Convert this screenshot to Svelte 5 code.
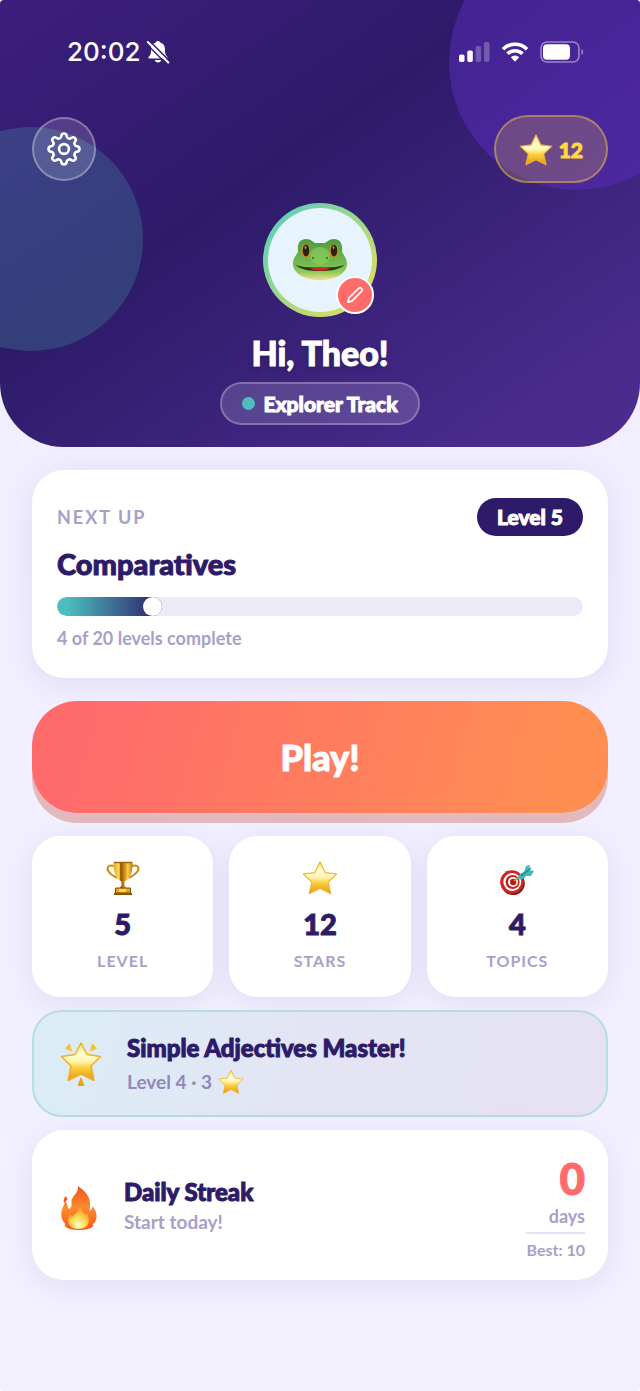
<script lang="ts">
  const player = { name: "Theo", track: "Explorer Track", stars: 12 };
  const next = { title: "Comparatives", level: 5, done: 4, total: 20 };
  const streak = { days: 0, best: 10 };

  const stats = [
    { icon: "trophy", value: 5, label: "LEVEL" },
    { icon: "star", value: 12, label: "STARS" },
    { icon: "target", value: 4, label: "TOPICS" },
  ];

  let percent = $derived((next.done / next.total) * 100);

  // eight round teeth, each an outward arc followed by an inward one
  function gear_path() {
    const at = (deg: number) => {
      const a = (deg * Math.PI) / 180;
      return `${(18 + 13.6 * Math.sin(a)).toFixed(2)} ${(18 - 13.6 * Math.cos(a)).toFixed(2)}`;
    };
    let d = `M${at(-11)}`;
    for (let i = 0; i < 8; i++) {
      d += `A2.65 2.65 0 0 1 ${at(i * 45 + 11)}`;
      d += `A2.9 2.9 0 0 0 ${at(i * 45 + 34)}`;
    }
    return d + "Z";
  }
</script>

<svelte:head>
  <title>Home</title>
</svelte:head>

{#snippet star(size)}
  <svg width={size} height={size} viewBox="0 0 32 32" aria-hidden="true">
    <defs>
      <linearGradient id="gold" x1="0" y1="0" x2="0" y2="1">
        <stop offset="0" stop-color="#fbe27a" />
        <stop offset="0.28" stop-color="#fffbd0" />
        <stop offset="0.48" stop-color="#fef6b4" />
        <stop offset="0.66" stop-color="#fbcf3c" />
        <stop offset="1" stop-color="#e8960f" />
      </linearGradient>
    </defs>
    <path d="M16 1.600 20.600 11.200 31 12.400 23.300 19.600 25.500 30 16 25.200 6.500 30 8.700 19.600 1 12.400 11.400 11.200Z"
      fill="url(#gold)" stroke="#f0b22c" stroke-width="1" stroke-linejoin="round" />
  </svg>
{/snippet}

{#snippet trophy()}
  <svg width="36" height="36" viewBox="0 0 36 36" aria-hidden="true">
    <defs>
      <linearGradient id="cup" x1="0" x2="1">
        <stop offset="0" stop-color="#e9ac22" />
        <stop offset="0.3" stop-color="#ffd95a" />
        <stop offset="0.38" stop-color="#8f4f08" />
        <stop offset="0.55" stop-color="#c9820f" />
        <stop offset="0.75" stop-color="#f8cf4e" />
        <stop offset="1" stop-color="#c07a0c" />
      </linearGradient>
    </defs>
    <path d="M9 6C3 4 1 8 4 12c2 3 5 4 8 6M27 6c6-2 8 2 5 6-2 3-5 4-8 6" fill="none" stroke="#c98a17" stroke-width="2" />
    <path d="M8.500 2h19c.6 9-2 17-8 19.500v4l2 2.500h-7l2-2.500v-4C10.500 19 8 11 8.500 2Z" fill="url(#cup)" />
    <path d="M9 2.500h18" stroke="#a5650c" stroke-width="1.500" />
    <path d="M10.500 28h15v5h-15z" fill="#e0a323" stroke="#8c5009" />
    <path d="M14 29h8l-2 3h-6z" fill="#f9d866" />
    <path d="M9 34h18" stroke="#8c5009" stroke-width="2" />
  </svg>
{/snippet}

{#snippet target()}
  <svg width="36" height="36" viewBox="0 0 36 36" aria-hidden="true">
    <ellipse cx="14" cy="23.500" rx="11.800" ry="11.500" fill="#7e1712" />
    <circle cx="13" cy="22" r="11.800" fill="#d3221f" />
    <circle cx="13.300" cy="22" r="9" fill="#fff" />
    <circle cx="13.600" cy="22" r="7" fill="#c9201d" />
    <circle cx="14" cy="22" r="5" fill="#fff" />
    <circle cx="14.200" cy="22" r="3.200" fill="#b81a1a" />
    <path d="M15 21 23 15" stroke="#d49a3b" stroke-width="1.500" />
    <path d="M19 19c0-3 2-6 6-7l2-6 4-1-1 5 5 1-3 5-5 0c-2 3-5 4-8 3Z" fill="#3fb9bd" />
    <path d="m22 16 10-8" stroke="#1e7f93" stroke-width="1.200" />
  </svg>
{/snippet}

<div class="screen">
  <header>
    <div class="bubble right"></div>
    <div class="bubble left"></div>

    <div class="status">
      <div class="clock">
        <span>20:02</span>
        <svg width="24" height="24" viewBox="0 0 24 24" aria-label="Silent">
          <path d="M3.500 18.500c-1.500 0-1.500-1-.5-2 2-2 2-3.500 2-7C5 5 7.500 3 10 2.500 10 .5 14 .5 14 2.500c2.500.5 5 2.500 5 7 0 3.500 0 5 2 7 1 1 1 2-.5 2Z" fill="#fff" />
          <path d="M8.800 20h6.400c-.4 3.300-6 3.300-6.400 0Z" fill="#fff" />
          <path d="m3.500 1 21 21" stroke="#351d75" stroke-width="1.600" />
          <path d="m1.800 2 20.500 20.500" stroke="#fff" stroke-width="2" stroke-linecap="round" />
          <path d="m0 3.400 20.500 20.500" stroke="#351d75" stroke-width="1.400" />
        </svg>
      </div>
      <div class="signals">
        <svg width="32" height="20" viewBox="0 0 32 20" aria-label="Signal">
          <rect x="1" y="12.500" width="5.500" height="7.500" rx="1.800" fill="#fff" />
          <rect x="9.300" y="8.500" width="5.500" height="11.500" rx="1.800" fill="#fff" />
          <rect x="17.600" y="4" width="5.500" height="16" rx="1.800" fill="#fff" opacity="0.25" />
          <rect x="26" y="0" width="5.500" height="20" rx="1.800" fill="#fff" opacity="0.25" />
        </svg>
        <svg width="28" height="20" viewBox="0 0 28 20" aria-label="Wi-Fi">
          <g fill="none" stroke="#fff" stroke-width="3.600">
            <path d="M2 7.200a17 17 0 0 1 24 0" />
            <path d="M6.500 11.800a10.600 10.600 0 0 1 15 0" />
          </g>
          <path d="M9.800 15.200a6 6 0 0 1 8.400 0L14 19.700Z" fill="#fff" />
        </svg>
        <svg width="44" height="22" viewBox="0 0 44 22" aria-label="Battery">
          <rect x="1" y="1" width="38" height="20" rx="6" fill="none" stroke="#fff" stroke-opacity="0.45" stroke-width="1.600" />
          <rect x="3" y="3.200" width="27" height="15.600" rx="4" fill="#fff" />
          <path d="M41.500 8c2 1 2 5 0 6Z" fill="#fff" opacity="0.5" />
        </svg>
      </div>
    </div>

    <div class="toolbar">
      <button class="settings" aria-label="Settings">
        <svg width="36" height="36" viewBox="0 0 36 36" fill="none" stroke="#fff" stroke-width="2.600" stroke-linejoin="round">
          <path d={gear_path()} />
          <circle cx="18" cy="18" r="4.900" />
        </svg>
      </button>
      <div class="coins">
        {@render star(34)}
        <span>{player.stars}</span>
      </div>
    </div>

    <div class="avatar">
      <div class="face">
        <svg width="54" height="44" viewBox="0 0 54 44" aria-label="Frog">
          <defs>
            <linearGradient id="skin" x1="0" y1="0" x2="0" y2="1">
              <stop offset="0" stop-color="#4f9a3d" />
              <stop offset="0.6" stop-color="#72bb4e" />
              <stop offset="0.8" stop-color="#8ccb58" />
              <stop offset="1" stop-color="#f3df8a" />
            </linearGradient>
          </defs>
          <path d="M13 1c5 0 7 3 9 4h10c2-1 4-4 9-4 6 0 9 5 8 12 0 3 5 6 5 13 0 9-11 16-27 16S0 35 0 26C0 19 5 16 5 13 4 6 7 1 13 1Z" fill="url(#skin)" />
          <ellipse cx="27" cy="18" rx="10" ry="9" fill="#8fd163" opacity="0.6" />
          <ellipse cx="13" cy="13" rx="4.500" ry="7" fill="#d98a1f" />
          <ellipse cx="41" cy="13" rx="4.500" ry="7" fill="#d98a1f" />
          <ellipse cx="13" cy="12.500" rx="3.300" ry="6" fill="#2b2115" />
          <ellipse cx="41" cy="12.500" rx="3.300" ry="6" fill="#2b2115" />
          <ellipse cx="12.500" cy="9.500" rx="1" ry="1.800" fill="#988768" />
          <ellipse cx="40.500" cy="9.500" rx="1" ry="1.800" fill="#988768" />
          <circle cx="20" cy="20" r="1" fill="#2c5a22" />
          <circle cx="34" cy="20" r="1" fill="#2c5a22" />
          <path d="M2.500 27c9 2.500 15 2.500 24.500 2.500s15.500 0 24.500-2.500c-6 5-14 6-24.500 6S8.500 32 2.500 27Z" fill="#35321b" />
          <path d="M17 30.500c5-1.500 15-1.500 20 0-4 2.800-16 2.800-20 0Z" fill="#cf2a19" />
        </svg>
      </div>
      <button class="edit" aria-label="Edit avatar">
        <svg width="18" height="18" viewBox="0 0 20 20" fill="none" stroke="#fff" stroke-width="1.900" stroke-linejoin="round">
          <path d="m2 18 1.200-4.700L14.200 2.500c2-1.700 4.900 1 3.200 3.200L6.600 16.800Z" />
        </svg>
      </button>
    </div>

    <h1>Hi, {player.name}!</h1>
    <div class="track"><i></i>{player.track}</div>
  </header>

  <main>
    <section class="card next">
      <div class="next-top">
        <span class="eyebrow">NEXT UP</span>
        <span class="level">Level {next.level}</span>
      </div>
      <h2>{next.title}</h2>
      <div class="bar" role="progressbar" aria-label="Levels complete" aria-valuenow={next.done} aria-valuemin="0" aria-valuemax={next.total}>
        <div class="fill" style="width: {percent}%"></div>
      </div>
      <p>{next.done} of {next.total} levels complete</p>
    </section>

    <button class="play">Play!</button>

    <div class="stats">
      {#each stats as stat}
        <div class="card stat">
          {#if stat.icon === "trophy"}
            {@render trophy()}
          {:else if stat.icon === "star"}
            {@render star(36)}
          {:else}
            {@render target()}
          {/if}
          <strong>{stat.value}</strong>
          <span>{stat.label}</span>
        </div>
      {/each}
    </div>

    <section class="award">
      <svg width="42" height="46" viewBox="0 0 42 46" aria-hidden="true">
        <path d="M21 2 27 13.500 40.500 15.500 31 25 34 39.500 21 33 8 39.500 11 25 1.500 15.500 15 13.500Z"
          fill="url(#gold)" stroke="#efb02a" stroke-width="1.500" stroke-linejoin="round" />
        <g fill="#f8c52c" stroke="#f8c52c" stroke-linejoin="round">
          <path d="m9.500 3 2 7-6-2.500ZM32.500 3l-2 7 6-2.500Z" />
          <path d="m21 37 3 7.500h-6Z" fill="#e8a218" stroke="#e8a218" />
        </g>
      </svg>
      <div class="text">
        <h3>Simple Adjectives Master!</h3>
        <p>Level 4 · 3 {@render star(26)}</p>
      </div>
    </section>

    <section class="card streak">
      <svg width="36" height="46" viewBox="0 0 36 46" aria-hidden="true">
        <defs>
          <linearGradient id="flame" x1="0" y1="0" x2="0" y2="1">
            <stop offset="0" stop-color="#f4511e" />
            <stop offset="0.5" stop-color="#fb8c2e" />
            <stop offset="1" stop-color="#f9541c" />
          </linearGradient>
          <radialGradient id="glow" cx="0.5" cy="0.8" r="0.6">
            <stop offset="0" stop-color="#fffbd2" />
            <stop offset="0.5" stop-color="#fde05a" />
            <stop offset="1" stop-color="#fba52c" />
          </radialGradient>
        </defs>
        <path d="M17 1c7 5 12 10 12 18 0 3 0 5-.5 7 2-1 3-3 3-5 5 6 5 12 2 17l-2 1 1 2C29 44 24 45 18 45S7 44 3.500 41l1-2C0 35-1 28 2 22c1.500-3 2-4 2-6 3 3 2 6 4 8 2-1 3-3 2.500-7C10 11 18 9 17 1Z" fill="url(#flame)" />
        <path d="m5 11 1.500 3.500L3 18C2 15 3 13 5 11Z" fill="#f4511e" />
        <path d="M19 21c1 4 4 6 5 9l2-2c2 5 3 9 0 13-4 4-13 4-17 0-3-4-2-8 0-12l2 3c3-3 7-6 8-11Z" fill="url(#glow)" />
      </svg>
      <div class="text">
        <h3>Daily Streak</h3>
        <p>Start today!</p>
      </div>
      <div class="count">
        <strong>{streak.days}</strong>
        <span class="days">days</span>
        <span class="best">Best: {streak.best}</span>
      </div>
    </section>
  </main>
</div>

<style>
  :global(body) {
    margin: 0;
    background: #fff;
  }

  .screen {
    --ink: #2d1b69;
    --muted: #a8a0c8;
    min-height: 100vh;
    border-radius: 4px;
    overflow: hidden;
    background: linear-gradient(#f0edff, #f3f0ff);
    font-family: "Lato", "Open Sans", sans-serif;
    font-weight: 700;
    color: var(--ink);
  }

  svg {
    display: block;
    flex: none;
  }

  button {
    font: inherit;
    border: none;
    padding: 0;
    cursor: pointer;
  }

  h1, h2, h3, p {
    margin: 0;
  }

  /* heavy rounded lettering */
  h1, h2, h3, strong, .level, .play, .track, .coins {
    font-weight: 900;
    -webkit-text-stroke: 1px currentColor;
    stroke-linejoin: round;
  }

  header {
    position: relative;
    overflow: hidden;
    display: flex;
    flex-direction: column;
    align-items: center;
    padding-bottom: 22px;
    border-radius: 0 0 64px 64px;
    background: linear-gradient(145deg, #3d1e7e 0%, #2d1b69 40%, #4a2c8f 90%);
    color: #fff;
  }

  .bubble {
    position: absolute;
    border-radius: 50%;
  }

  .bubble.right {
    width: 256px;
    height: 256px;
    top: -66px;
    right: -65px;
    background: rgba(91, 44, 190, 0.5);
  }

  .bubble.left {
    width: 224px;
    height: 224px;
    top: 127px;
    left: -81px;
    background: rgba(78, 205, 196, 0.2);
  }

  .status, .toolbar {
    position: relative;
    align-self: stretch;
    display: flex;
    justify-content: space-between;
    align-items: center;
  }

  .status {
    min-height: 104px;
    padding: 0 56px 0 67px;
  }

  .clock {
    display: flex;
    align-items: center;
    gap: 5px;
    font: 500 26px/32px "Inter", sans-serif;
  }

  .signals {
    display: flex;
    align-items: center;
    gap: 11px;
  }

  .toolbar {
    box-sizing: border-box;
    margin-top: 11px;
    padding: 0 32px;
  }

  .settings {
    box-sizing: border-box;
    width: 64px;
    height: 64px;
    display: grid;
    place-items: center;
    border: 2px solid rgba(255, 255, 255, 0.3);
    border-radius: 50%;
    background: rgba(255, 255, 255, 0.15);
  }

  .coins {
    display: flex;
    align-items: center;
    gap: 6px;
    padding: 16px 23px 14px;
    border: 2px solid rgba(255, 217, 61, 0.4);
    border-radius: 34px;
    background: rgba(255, 217, 61, 0.2);
    color: #ffd93d;
    font-size: 21px;
    line-height: 34px;
  }

  .avatar {
    position: relative;
    margin-top: 20px;
    padding: 5px;
    border-radius: 50%;
    background: linear-gradient(135deg, #4ecdc4, #f4e04a);
  }

  .face {
    width: 104px;
    height: 104px;
    display: grid;
    place-items: center;
    border-radius: 50%;
    background: #e8f4fd;
  }

  .edit {
    position: absolute;
    right: 3px;
    bottom: 3px;
    box-sizing: border-box;
    width: 38px;
    height: 38px;
    display: grid;
    place-items: center;
    border: 2px solid #fff;
    border-radius: 50%;
    background: #ff6b6b;
  }

  h1 {
    position: relative;
    margin-top: 16px;
    font-size: 34px;
    line-height: 40px;
    text-shadow: 0 3px 6px rgba(0, 0, 0, 0.25);
  }

  .track {
    position: relative;
    display: flex;
    align-items: center;
    gap: 8px;
    margin-top: 9px;
    padding: 8px 20px;
    border: 2px solid rgba(255, 255, 255, 0.25);
    border-radius: 22px;
    background: rgba(255, 255, 255, 0.15);
    font-size: 21px;
    line-height: 23px;
  }

  .track i {
    width: 13px;
    height: 13px;
    border-radius: 50%;
    background: #4dbdbd;
  }

  main {
    display: flex;
    flex-direction: column;
    padding: 23px 32px 111px;
  }

  .card {
    border-radius: 32px;
    background: #fff;
    box-shadow: 0 6px 32px rgba(45, 27, 105, 0.08);
  }

  .next {
    padding: 28px 25px;
  }

  .next-top {
    display: flex;
    justify-content: space-between;
    align-items: center;
  }

  .eyebrow {
    color: var(--muted);
    font-size: 18px;
    letter-spacing: 2px;
  }

  .level {
    padding: 7px 20px;
    border-radius: 19px;
    background: var(--ink);
    color: #fff;
    font-size: 21px;
    line-height: 24px;
  }

  h2 {
    margin-top: 12px;
    font-size: 29px;
    line-height: 32px;
  }

  .bar {
    height: 19px;
    margin-top: 17px;
    border-radius: 10px;
    overflow: hidden;
    background: #edeaf7;
  }

  .fill {
    height: 100%;
    display: flex;
    justify-content: flex-end;
    border-radius: 10px;
    background: linear-gradient(90deg, #4dbdbd 10%, #2d1b69);
  }

  .fill::after {
    content: "";
    width: 19px;
    border-radius: 50%;
    background: #fff;
  }

  .next p {
    margin-top: 10px;
    color: var(--muted);
    font-size: 18px;
    line-height: 24px;
  }

  .play {
    height: 112px;
    margin: 23px 0;
    border-radius: 45px;
    background: linear-gradient(105deg, #ff6b6b 10%, #ff8e53 90%);
    box-shadow: 0 10px 0 #e2babd;
    color: #fff;
    font-size: 36px;
    font-weight: 900;
  }

  .stats {
    display: grid;
    grid-template-columns: repeat(3, 1fr);
    gap: 16px;
  }

  .stat {
    display: flex;
    flex-direction: column;
    align-items: center;
    padding: 24px 0 25px;
    border-radius: 28px;
  }

  .stat strong {
    margin-top: 10px;
    font-size: 29px;
    line-height: 36px;
  }

  .stat span {
    margin-top: 8px;
    color: var(--muted);
    font-size: 16px;
    line-height: 22px;
    letter-spacing: 1px;
  }

  .award, .streak {
    display: flex;
    align-items: center;
    margin-top: 13px;
  }

  .award {
    gap: 25px;
    padding: 21px 26px 20px;
    border: 2px solid #b6dde2;
    border-radius: 30px;
    background: linear-gradient(110deg, #dcecf6 10%, #e4e4f4 50%, #e5e2f2);
  }

  h3 {
    font-size: 24px;
    line-height: 30px;
  }

  .text p {
    display: flex;
    align-items: center;
    gap: 6px;
    font-size: 19px;
    line-height: 26px;
  }

  .award .text p {
    margin-top: 6px;
    color: #9187b8;
  }

  .streak {
    gap: 27px;
    padding: 26px 23px 20px 29px;
  }

  .streak .text {
    flex: 1;
    padding-bottom: 4px;
  }

  .streak .text p {
    margin-top: 2px;
    color: var(--muted);
  }

  .count {
    display: flex;
    flex-direction: column;
    align-items: flex-end;
    color: var(--muted);
  }

  .count strong {
    color: #ff6b6b;
    font-size: 44px;
    line-height: 44px;
  }

  .days {
    margin-top: 4px;
    font-size: 18px;
    line-height: 24px;
  }

  .best {
    margin-top: 4px;
    padding-top: 6px;
    border-top: 2px solid #e6e2f2;
    font-size: 16px;
    line-height: 20px;
  }
</style>
